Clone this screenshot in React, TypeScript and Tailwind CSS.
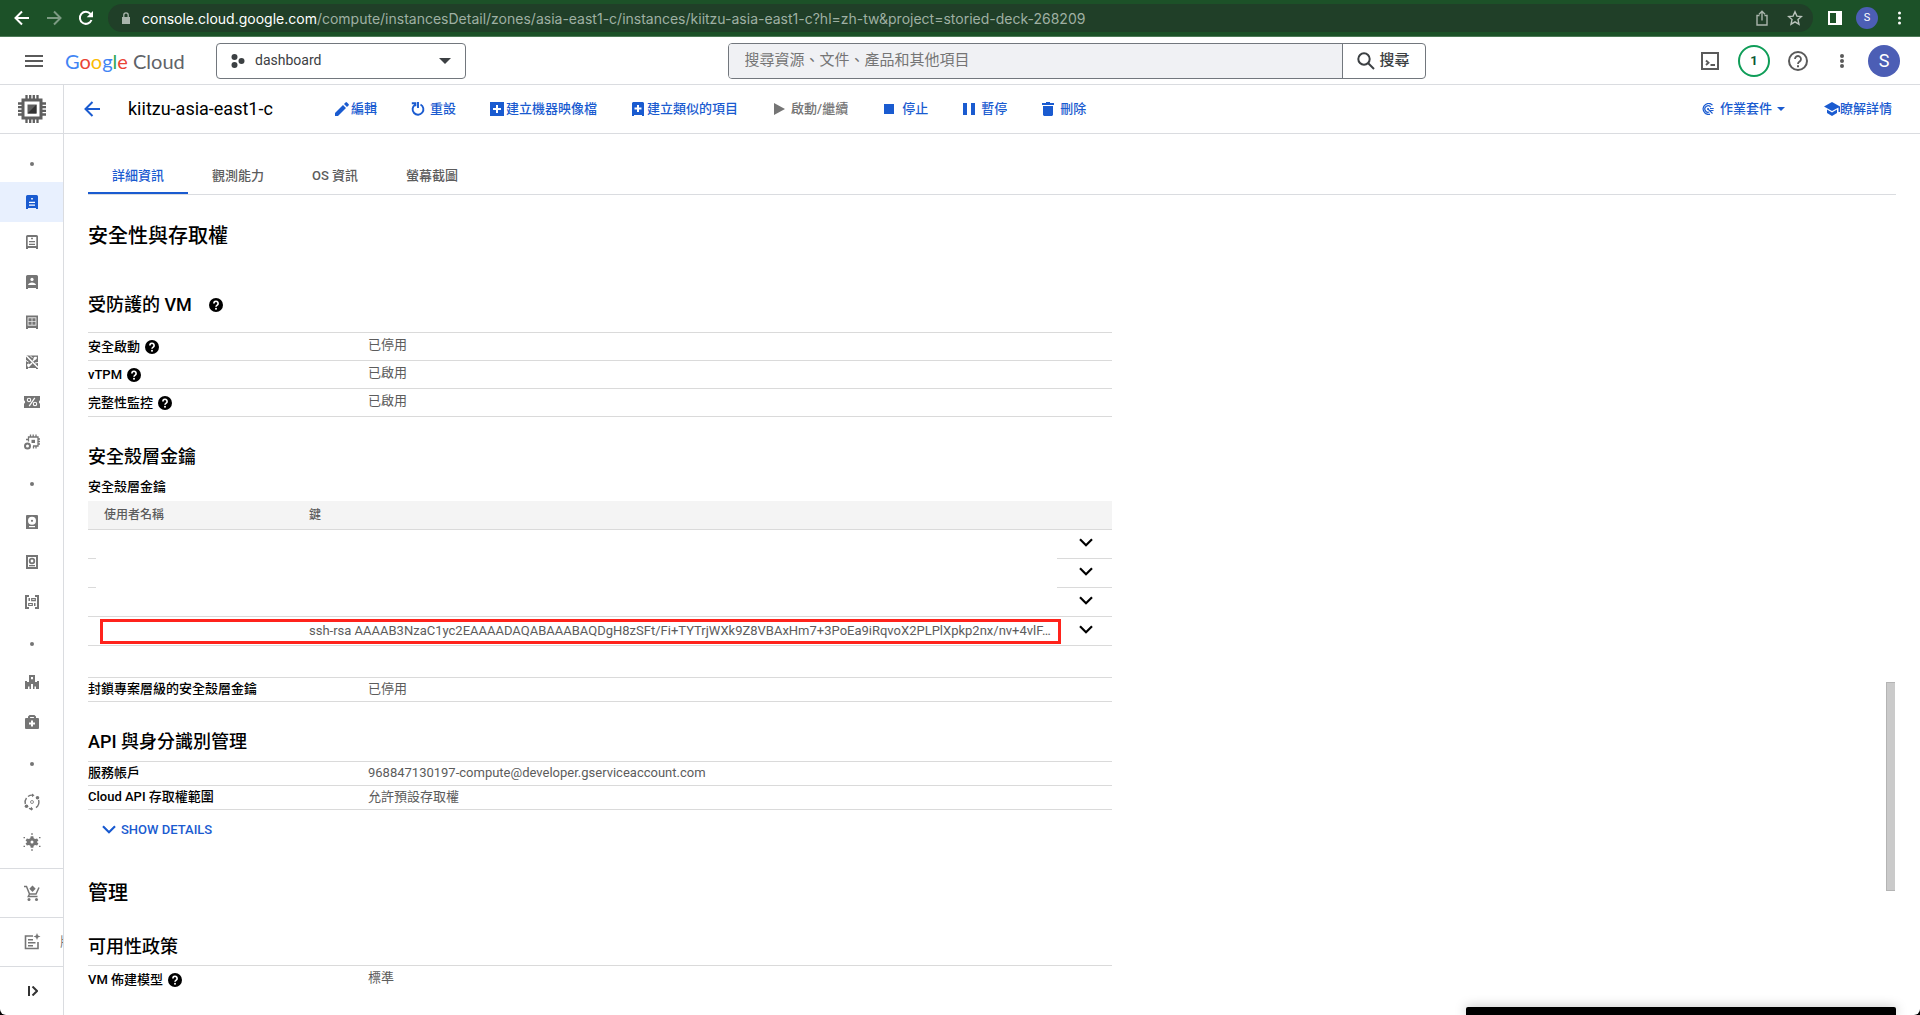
import React from 'react';

type P = { children?: React.ReactNode; className?: string; vb?: string };
const Svg = ({ children, className = 'size-[18px]', vb = '0 0 18 18' }: P) => (
  <svg viewBox={vb} className={`shrink-0 ${className}`} fill="currentColor" aria-hidden="true">
    {children}
  </svg>
);
const line = { fill: 'none', stroke: 'currentColor' } as const;

const Help = () => (
  <Svg className="size-[14px]" vb="0 0 14 14">
    <circle cx="7" cy="7" r="7" />
    <path d="M4.9 5.4a2.1 2.1 0 1 1 3.3 1.7C7.4 7.7 7 8 7 8.8" fill="none" stroke="#fff" strokeWidth="1.7" />
    <rect x="6.1" y="9.9" width="1.8" height="1.7" fill="#fff" />
  </Svg>
);
const Chevron = () => (
  <Svg className="h-[9px] w-[14px]" vb="0 0 14 9">
    <path d="M1 1.2 7 7.2 13 1.2" {...line} strokeWidth="2.2" />
  </Svg>
);

const server = 'M4.5 2h9A1.5 1.5 0 0 1 15 3.5V16h-2v-1H5v1H3V3.5A1.5 1.5 0 0 1 4.5 2Z';
const W = '#fff';
const icons: Record<string, React.ReactNode> = {
  vm: (<><path d={server} /><path d="M8.2 5h1.600v1.600H8.200zM6 8.800h6V10H6zM6 11.500h6v1.200H6z" fill={W} /></>),
  template: (<><path d={server} /><path d="M4.700 4h8.600v9H4.700z" fill={W} /><path d="M8.100 4.700h1.800v1.600H8.100zM6 8h6v1.200H6zM6 10.700h6v1.200H6z" /></>),
  sole: (<><path d={server} /><circle cx="9" cy="6.400" r="1.600" fill={W} /><path d="M5 12c.400-3.500 7.600-3.500 8 0z" fill={W} /></>),
  image: (<><path d="M3 2.500h12V16h-2v-1H5v1H3z" /><path d="M4.600 4.300h8.800v8.400H4.600z" fill={W} fillOpacity=".85" /><path d="M5.500 5.200h3.100v3H5.500zM9.400 5.200h3.100v3H9.400zM5.500 9h3.100v2.800H5.500zM9.400 9h3.100v2.800H9.400z" /></>),
  tpu: (<><path d="M3 2.500h12V16h-2v-1H5v1H3z" /><path d="M3 2.500 15 14.500M5 14l4-4M10 8l3.500-4" fill="none" stroke={W} strokeWidth="1.500" /><circle cx="12" cy="5.200" r="1.500" fill={W} /><circle cx="5.500" cy="12" r="1.500" fill={W} /><path d="M7 2.500 9.500 5M3 7.500l2.500 1.500M15 9.500l-3 .500" stroke={W} /></>),
  percent: (<><path d="M1 3h16v4.200a2 2 0 0 0 0 3.600V15H1v-4.200a2 2 0 0 0 0-3.600z" /><path d="M11.800 4.800 6.200 13.200" stroke={W} strokeWidth="1.200" /><circle cx="6" cy="7" r="1.700" fill="none" stroke={W} strokeWidth="1.100" /><circle cx="12" cy="11" r="1.700" fill="none" stroke={W} strokeWidth="1.100" /></>),
  chip: (<><path d="M5.500 8.500V4h9.500v9h-5M7.500 4V1.500M10.200 4V1.500M13 4V1.500M15 6h2M15 8.500h2M15 11h2M13 13v2.500M10.500 13v2.500M5.500 6.500H3" {...line} strokeWidth="1.300" /><path d="M8.500 6.800H12V10H8.500z" /><circle cx="4.500" cy="13" r="2.500" {...line} strokeWidth="2" /></>),
  disk: (<><path d="M4 2h10a1 1 0 0 1 1 1v13H3V3a1 1 0 0 1 1-1z" /><circle cx="9" cy="7.800" r="4" fill={W} /><circle cx="9" cy="7.800" r="1.100" /><path d="M6 13h6v1.200H6z" fill={W} /></>),
  snapshot: (<><path d="M4 3h10v12H4z" {...line} strokeWidth="2" /><circle cx="9" cy="8" r="2.300" {...line} strokeWidth="1.800" /><path d="M6 12h6v1.300H6z" /></>),
  group: (<><path d="M6 3H3v12h3M12 3h3v12h-3" {...line} strokeWidth="2" /><path d="M5.500 5H7v3H5.500zM11 10h1.500v3H11z" /><path d="M8.700 5.600h3.600v2H8.700zM5.700 10.500h3.600v2H5.700z" {...line} strokeWidth="1.200" /></>),
  health: (<><path d="M6 2h6v7h2V8h2v8h-3v-2.500h-1.500V16H10v-5H8v5H6.500v-2.500H5V16H2V8h2v1h2z" /><path d="M8 4h2v2.200H8z" fill={W} /></>),
  bag: (<><path d="M6 6V4l1-1h4l1 1v2" {...line} strokeWidth="2" /><rect x="2" y="5" width="14" height="11" rx="1" /><path d="M8 7.500h2v2h2v2h-2v2H8v-2H6v-2h2z" fill={W} /></>),
  migrate: (<><path d="M5 3.500A7 7 0 0 1 10 2.200M15.600 7A7 7 0 0 1 13 14.600M10 15.900A7 7 0 0 1 6 15.300M2.300 11A7 7 0 0 1 3.500 5" {...line} strokeWidth="1.400" /><circle cx="14.500" cy="4.800" r="1.800" /><circle cx="3.500" cy="13.200" r="1.800" /><circle cx="9" cy="9" r="1.500" {...line} strokeWidth=".8" /><path d="m9 .500 2.500 1.800L9 4.300zM9 13.700v4l-2.500-2z" /></>),
  gear: (<><path d="M7.700 3.300h2.600l.400 2 1.400.800 2-.700 1.300 2.200L13.800 9l1.600 1.400-1.300 2.200-2-.700-1.400.800-.400 2H7.700l-.400-2-1.400-.800-2 .700-1.300-2.200L4.200 9 2.600 7.600l1.300-2.200 2 .700 1.400-.800z" /><circle cx="9" cy="9" r="1.500" fill={W} /><path d="M8.400 0h1.200v2H8.400zM8.400 16h1.200v2H8.400zM.500 4h1.500v1.300H.500zM16 4h1.500v1.300H16zM.500 12.700h1.500V14H.500zM16 12.700h1.500V14H16z" /></>),
  cart: (<><path d="M1 2.500h2.500l3 7.500h6.500l3-6.500M6.500 10l-1.200 2.500H14.500" {...line} strokeWidth="1.500" /><path d="m9.500 1.500 3.200 3.200-3.200 3.200-3.200-3.200z" /><circle cx="6" cy="15.500" r="1.500" /><circle cx="13.500" cy="15.500" r="1.500" /></>),
  notes: (<><path d="M10 3H2.500v12.500H15V9" {...line} strokeWidth="1.600" /><path d="M5 6h5v1.400H5zM5 9h7.500v1.400H5zM5 12h5v1.400H5zM14 0l1 2.500L17.500 3.500 15 4.500 14 7l-1-2.500L10.500 3.500 13 2.500z" /></>),
};
const nav = ['dot', 'vm!', 'template', 'sole', 'image', 'tpu', 'percent', 'chip', 'dot', 'disk', 'snapshot', 'group', 'dot', 'health', 'bag', 'dot', 'migrate', 'gear'];

const ActionBtn = ({ icon, text, cls, gap = 'gap-2' }: { icon: React.ReactNode; text: string; cls?: string; gap?: string }) => (
  <button className={`flex items-center whitespace-nowrap ${gap} ${cls ?? ''}`}>
    {icon}
    {text}
  </button>
);

const Row = ({ label, value, help, tall, last }: { label: string; value: string; help?: boolean; tall?: boolean; last?: boolean }) => (
  <tr className={`${last ? 'h-[30px]' : tall ? 'h-7 border-b border-[#dadada]' : 'h-6 border-b border-[#dadada]'}`}>
    <th scope="row" className="w-[280px] p-0 text-left font-medium text-black">
      <span className="flex items-center gap-[5px]">
        {label}
        {help && <Help />}
      </span>
    </th>
    <td className={`p-0 ${tall ? 'pb-1' : ''}`}>{value}</td>
  </tr>
);
const tableCls = 'w-full border-collapse border-t border-[#dadada] text-[13px] leading-5';
const h3 = 'text-[18px] leading-6 font-medium text-black';

export default function App() {
  return (
    <div className="bg-black">
    <div className="relative flex h-screen flex-col overflow-hidden rounded-b-md bg-white font-['Roboto','Noto_Sans_CJK_TC',sans-serif] text-[13px] text-[#5c5c5c]">
      <div className="flex h-[37px] shrink-0 items-center border-b border-[#4d7a57] bg-[#1c5128] text-white">
        <button aria-label="上一頁" className="ml-[14px]"><Svg className="size-4" vb="0 0 16 16"><path d="M15 8H2M8 1.500 1.500 8 8 14.500" {...line} strokeWidth="2" /></Svg></button>
        <button aria-label="下一頁" className="ml-4 text-[#7c9b83]"><Svg className="size-4" vb="0 0 16 16"><path d="M1 8h13M8 1.500 14.500 8 8 14.500" {...line} strokeWidth="2" /></Svg></button>
        <button aria-label="重新載入" className="ml-4"><Svg className="size-4" vb="0 0 16 16"><path d="M13.500 10A6 6 0 1 1 12.500 4" {...line} strokeWidth="2" /><path d="M15 1v6.300H8.700z" /></Svg></button>
        <div className="mr-[15px] ml-[14px] flex h-7 min-w-0 flex-1 items-center rounded-full bg-[#203f28] pr-2.5 pl-[14px]">
          <Svg className="h-3 w-2 text-[#a9b5ac]" vb="0 0 8 12"><path d="M0 5h8v7H0z" /><path d="M1.800 5V3a2.200 2.200 0 0 1 4.400 0v2" {...line} strokeWidth="1.300" /></Svg>
          <span className="ml-3 min-w-0 flex-1 truncate font-['Inter',sans-serif] text-[14px] text-[#9fb0a3]">
            <span className="text-white">console.cloud.google.com</span>/compute/instancesDetail/zones/asia-east1-c/instances/kiitzu-asia-east1-c?hl=zh-tw&amp;project=storied-deck-268209
          </span>
          <button aria-label="分享" className="mr-[17px] text-[#a9b5ac]"><Svg className="size-4" vb="0 0 16 16"><path d="M5.500 5.500H3V15h10V5.500h-2.500M8 10.500V1.500M5 4.300l3-3 3 3" {...line} strokeWidth="1.400" /></Svg></button>
          <button aria-label="加入書籤" className="text-[#b9c3bb]"><Svg className="size-4" vb="0 0 16 16"><path d="m8 1.800 1.900 4.300 4.600.400-3.500 3.100 1 4.600L8 11.800l-4 2.400 1-4.600L1.500 6.500l4.600-.400z" {...line} strokeWidth="1.400" /></Svg></button>
        </div>
        <button aria-label="側邊面板"><Svg className="size-[14px]" vb="0 0 14 14"><path d="M0 0h14v14H0zM2 2v10h6V2z" fillRule="evenodd" /></Svg></button>
        <span className="ml-[14px] flex size-[22px] items-center justify-center rounded-full bg-[#4c5eb5] text-[11px]">S</span>
        <button aria-label="選單" className="mr-[19px] ml-5"><Svg className="h-[14px] w-[3px]" vb="0 0 3 14"><circle cx="1.500" cy="2" r="1.500" /><circle cx="1.500" cy="7" r="1.500" /><circle cx="1.500" cy="12" r="1.500" /></Svg></button>
      </div>

      <header className="flex h-12 shrink-0 items-center border-b border-[#dadce0] bg-white">
        <button aria-label="主選單" className="ml-[25px] text-[#5a5a5a]"><Svg className="h-3 w-[18px]" vb="0 0 18 12"><path d="M0 0h18v2H0zM0 5h18v2H0zM0 10h18v2H0z" /></Svg></button>
        <a href="#" aria-label="Google Cloud" className="ml-[22px] w-[129px] font-['Lato',sans-serif] text-[20px] leading-6 whitespace-nowrap text-[#5f6368]">
          <span className="text-[#4285f4]">G</span><span className="text-[#ea4335]">o</span><span className="text-[#fbbc04]">o</span><span className="text-[#4285f4]">g</span><span className="text-[#34a853]">l</span><span className="text-[#ea4335]">e</span> Cloud
        </a>
        <button className="ml-[22px] flex h-9 w-[250px] items-center rounded border border-[#72777d] px-[14px] text-[14px] text-[#3c4043]">
          <Svg className="size-[14px]" vb="0 0 14 14"><circle cx="3.500" cy="3" r="3" /><circle cx="3.500" cy="11" r="3" /><circle cx="10.500" cy="7" r="3" /></Svg>
          <span className="ml-2.5 flex-1 text-left">dashboard</span>
          <Svg className="h-1.5 w-3" vb="0 0 12 6"><path d="M0 0h12L6 6z" /></Svg>
        </button>
        <div className="mx-auto flex h-9 w-[698px] items-stretch overflow-hidden rounded border border-[#72777d]">
          <input aria-label="搜尋" placeholder="搜尋資源、文件、產品和其他項目" className="min-w-0 flex-1 bg-[#f0f1f4] px-4 text-[15px] placeholder:text-[#757575]" />
          <button className="flex w-[83px] items-center justify-center gap-1 border-l border-[#72777d] text-[15px] font-medium text-[#3c4043]">
            <Svg><circle cx="7" cy="7" r="5.700" {...line} strokeWidth="2" /><path d="m11 11 6 6" {...line} strokeWidth="2" /></Svg>搜尋
          </button>
        </div>
        <div className="mr-5 flex items-center pl-3.5 text-[#5a5a5a]">
          <button aria-label="Cloud Shell"><Svg><path d="M1 1h16v16H1z" {...line} strokeWidth="2" /><path d="m5 8.500 2.500 2.300L5 13M9.500 13H14" {...line} strokeWidth="1.900" /></Svg></button>
          <button className="ml-[19px] flex size-8 items-center justify-center rounded-full border-2 border-[#0f9d58] text-[13px] font-bold text-[#0b5a34]">1</button>
          <button aria-label="說明" className="ml-[18px]"><Svg className="size-5" vb="0 0 20 20"><circle cx="10" cy="10" r="9" {...line} strokeWidth="2" /><path d="M7 8a3 3 0 1 1 4.500 2.600C10.300 11.400 10 11.800 10 13" {...line} strokeWidth="1.800" /><path d="M9 14.200h2v2H9z" /></Svg></button>
          <button aria-label="更多" className="ml-8"><Svg className="h-4 w-1" vb="0 0 4 16"><circle cx="2" cy="3" r="2" /><circle cx="2" cy="8" r="2" /><circle cx="2" cy="13" r="2" /></Svg></button>
          <button aria-label="帳戶" className="ml-6 flex size-8 items-center justify-center rounded-full bg-[#4c5eb5] text-[18px] text-white">S</button>
        </div>
      </header>

      <div className="flex min-h-0 flex-1">
        <nav className="flex w-16 shrink-0 flex-col border-r border-[#dadce0] text-[#757575]">
          <div className="flex h-[49px] shrink-0 items-center justify-center border-b border-[#dadce0] text-[#5f5f5f]">
            <Svg className="size-[30px]" vb="0 0 30 30">
              <path d="M6 6h18v18H6z" {...line} strokeWidth="3" />
              <path d="M9.500 5V1M13.200 5V1M16.800 5V1M20.500 5V1M9.500 29v-4M13.200 29v-4M16.800 29v-4M20.500 29v-4M5 9.500H1M5 13.200H1M5 16.800H1M5 20.500H1M29 9.500h-4M29 13.200h-4M29 16.800h-4M29 20.500h-4" {...line} strokeWidth="2.300" />
              <path d="M10.500 10.500h9v9h-9z" /><path d="M19.500 10.500v9h-9z" fill="#333" />
            </Svg>
          </div>
          <ul className="pt-2 pb-1.5">
            {nav.map((n, i) => (
              <li key={i}>
                {n === 'dot' ? (
                  <div className="flex h-10 items-center justify-center pt-1"><span className="size-1 rounded-full bg-current" /></div>
                ) : (
                  <a href="#" aria-label={n.replace('!', '')} className={n === 'vm!' ? 'flex h-10 items-center justify-center bg-[#e8f0fe] text-[#1a5bd0]' : 'flex h-10 items-center justify-center'}>
                    <Svg>{icons[n.replace('!', '')]}</Svg>
                  </a>
                )}
              </li>
            ))}
          </ul>
          <a href="#" aria-label="Marketplace" className="flex h-[49px] items-center justify-center border-t border-[#dadce0]"><Svg>{icons.cart}</Svg></a>
          <a href="#" className="flex h-[49px] items-center border-t border-[#dadce0] pl-[23px]"><Svg>{icons.notes}</Svg><span className="ml-[19px] min-w-0 flex-1 overflow-hidden whitespace-nowrap">版</span></a>
          <button aria-label="展開" className="flex h-[49px] items-center justify-center border-t border-[#dadce0] pl-0.5 text-[#333]"><Svg className="size-2.5" vb="0 0 10 10"><path d="M1 0v10M4.500.500 9 5 4.500 9.500" {...line} strokeWidth="2" /></Svg></button>
        </nav>

        <div className="flex min-w-0 flex-1 flex-col">
          <div className="flex h-[49px] shrink-0 items-center border-b border-[#dadce0] font-medium text-[#1a5bd0]">
            <button aria-label="返回" className="ml-5"><Svg className="size-4" vb="0 0 16 16"><path d="M16 8H2M8.500 1 1.500 8l7 7" {...line} strokeWidth="2" /></Svg></button>
            <h1 className="ml-7 w-[207px] text-[18px] leading-6 font-normal whitespace-nowrap text-black">kiitzu-asia-east1-c</h1>
            <ActionBtn gap="gap-0.5" icon={<Svg className="size-[14px]" vb="0 0 14 14"><path d="M0 14v-3l8-8 3 3-8 8zM9 2l1.500-1.500a1 1 0 0 1 1.500 0L13.500 2a1 1 0 0 1 0 1.500L12 5z" /></Svg>} text="編輯" />
            <ActionBtn cls="ml-[34px]" gap="gap-[5px]" icon={<Svg className="size-[14px]" vb="0 0 14 14"><path d="M9.500 2.500a5.400 5.400 0 1 1-5.500.300M7 0v6M.800 1.200h3.600v3" {...line} strokeWidth="1.900" /></Svg>} text="重設" />
            <ActionBtn cls="ml-[34px]" gap="gap-0.5" icon={<Svg className="size-[14px]" vb="0 0 14 14"><path d="M0 0h14v14H0z" /><path d="M6 3h2v3h3v2H8v3H6V8H3V6h3z" fill="#fff" /></Svg>} text="建立機器映像檔" />
            <ActionBtn cls="ml-[35px]" gap="gap-[3px]" icon={<Svg className="h-[14px] w-3" vb="0 0 12 14"><path d="M1 0h10l1 1v13h-2v-1H2v1H0V1z" /><path d="M5 3h2v2.500h2.500v2H7V10H5V7.500H2.500v-2H5z" fill="#fff" /></Svg>} text="建立類似的項目" />
            <ActionBtn cls="ml-9 text-[#757575]" gap="gap-1.5" icon={<Svg className="h-3 w-[11px]" vb="0 0 11 12"><path d="M0 0l11 6-11 6z" /></Svg>} text="啟動/繼續" />
            <ActionBtn cls="ml-9" icon={<Svg className="size-2.5" vb="0 0 10 10"><path d="M0 0h10v10H0z" /></Svg>} text="停止" />
            <ActionBtn cls="ml-[35px]" gap="gap-1.5" icon={<Svg className="size-3" vb="0 0 12 12"><path d="M0 0h4v12H0zM8 0h4v12H8z" /></Svg>} text="暫停" />
            <ActionBtn cls="ml-[35px]" gap="gap-1.5" icon={<Svg className="h-[14px] w-3" vb="0 0 12 14"><path d="M4 0h4v1h4v2H0V1h4zM1 4h10v9l-1 1H2l-1-1z" /></Svg>} text="刪除" />
            <ActionBtn cls="ml-auto" gap="gap-1.5" icon={<Svg className="size-3" vb="0 0 12 12"><path d="M10.500 2.200A5.400 5.400 0 1 0 8 11.200M8.700 4.200a3.200 3.200 0 1 0-1.500 4.800" {...line} strokeWidth="1.200" /><circle cx="6" cy="6" r="1" /><path d="M6 6l4.500 4.500M8 5.500h3.700M8.500 7.500h3" {...line} strokeWidth="1.100" /></Svg>} text="作業套件" />
            <Svg className="mr-[39px] ml-[5px] h-1 w-2" vb="0 0 8 4"><path d="M0 0h8L4 4z" /></Svg>
            <ActionBtn cls="mr-7" gap="gap-0" icon={<Svg className="h-[14px] w-4" vb="0 0 16 14"><path d="M8 0l8 4.500V10h-1.500V5.500L8 9 0 4.500zM3 7.500l5 3 5-3V11l-5 3-5-3z" /></Svg>} text="瞭解詳情" />
          </div>

          <main className="mr-6 min-h-0 flex-1 overflow-hidden pl-6">
            <div role="tablist" className="flex h-[61px] items-end border-b border-[#dadce0] font-medium">
              {['詳細資訊', '觀測能力', 'OS 資訊', '螢幕截圖'].map((t, i) => (
                <button key={t} role="tab" aria-selected={i === 0} className={i === 0 ? 'h-[34px] border-b-2 border-[#1a5bd0] px-6 text-[#1a5bd0]' : 'h-[34px] border-b-2 border-transparent px-6'}>{t}</button>
              ))}
            </div>

            <div className="w-[1024px] max-w-full">
              <h2 className="mt-[27px] text-[20px] leading-7 font-medium text-black">安全性與存取權</h2>
              <h3 className={`mt-[43px] mb-[15px] flex items-center gap-[17px] ${h3}`}>受防護的 VM <Help /></h3>
              <table className={tableCls}><tbody>
                <Row tall help label="安全啟動" value="已停用" />
                <Row tall help label="vTPM" value="已啟用" />
                <Row tall help label="完整性監控" value="已啟用" />
              </tbody></table>

              <h3 className={`mt-7 ${h3}`}>安全殼層金鑰</h3>
              <table className="mt-2 w-full table-fixed border-collapse">
                <caption className="pb-1 text-left leading-5 font-medium text-black">安全殼層金鑰</caption>
                <colgroup><col className="w-3" /><col className="w-[209px]" /><col /><col className="w-[55px]" /></colgroup>
                <thead>
                  <tr className="h-7 border-b border-[#dadada] bg-[#f4f4f4] text-left text-[12px]">
                    <th colSpan={2} className="py-0 pl-4 font-medium">使用者名稱</th>
                    <th className="p-0 font-medium">鍵</th>
                    <th className="p-0" aria-label="展開" />
                  </tr>
                </thead>
                <tbody>
                  {[0, 1, 2, 3].map((i) => (
                    <tr key={i} className={i > 1 ? 'h-[29px] border-b border-[#dadada]' : 'h-[29px]'}>
                      <td className="p-0 align-bottom">{i < 2 && <div className="-mb-px w-2 border-b border-[#dadada]" />}</td>
                      {i === 3 ? (
                        <td colSpan={2} className="p-0 pt-0.5 align-middle">
                          <div className="-mr-1 h-[25px] border-3 border-[#ff231c] pr-[6px] pl-[206px]">
                            <div className="truncate leading-[18px]">ssh-rsa AAAAB3NzaC1yc2EAAAADAQABAAABAQDgH8zSFt/Fi+TYTrjWXk9Z8VBAxHm7+3PoEa9iRqvoX2PLPlXpkp2nx/nv+4vlF…</div>
                          </div>
                        </td>
                      ) : (<td colSpan={2} />)}
                      <td className={i < 2 ? 'border-b border-[#dadada] p-0' : 'p-0'}>
                        <button aria-label="展開金鑰" className="flex w-full justify-center pb-0.5 pl-0.5 text-black"><Chevron /></button>
                      </td>
                    </tr>
                  ))}
                </tbody>
              </table>

              <table className={`mt-[31px] ${tableCls}`}><tbody><Row label="封鎖專案層級的安全殼層金鑰" value="已停用" /></tbody></table>

              <h3 className={`mt-7 mb-[7px] ${h3}`}>API 與身分識別管理</h3>
              <table className={tableCls}><tbody>
                <Row label="服務帳戶" value="968847130197-compute@developer.gserviceaccount.com" />
                <Row label="Cloud API 存取權範圍" value="允許預設存取權" />
              </tbody></table>
              <button className="mt-2.5 ml-[14px] flex items-center gap-[5px] leading-5 font-medium text-[#1a5bd0]"><Chevron />SHOW DETAILS</button>

              <h2 className="mt-[39px] text-[20px] leading-7 font-medium text-black">管理</h2>
              <h3 className={`mt-7 mb-[6px] ${h3}`}>可用性政策</h3>
              <table className={tableCls}><tbody><Row tall help last label="VM 佈建模型" value="標準" /></tbody></table>
            </div>
          </main>
        </div>
      </div>

      <div className="absolute top-[682px] right-[25px] h-[209px] w-[9px] border-y border-l border-[#b4b4b4] bg-[#cacaca]" />
      <div className="absolute right-6 bottom-0 h-2 w-[430px] rounded-t-xs bg-black shadow-[0_0_12px_rgba(0,0,0,0.25)]" />
    </div>
    </div>
  );
}
